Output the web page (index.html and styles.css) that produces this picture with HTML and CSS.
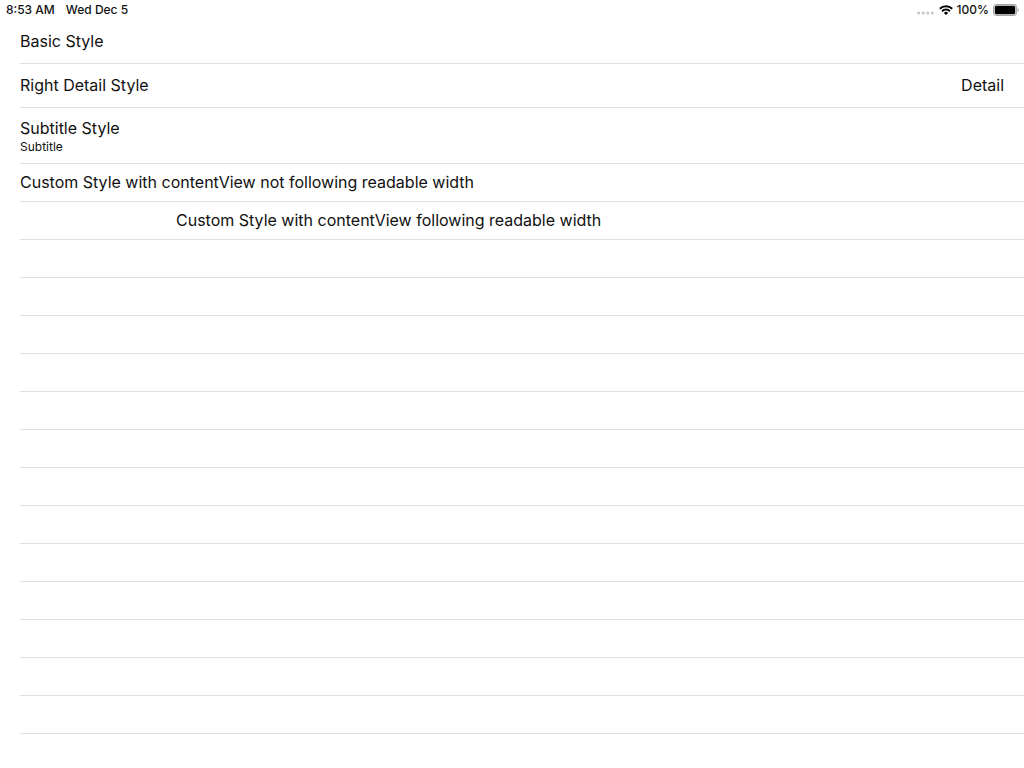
FILE: index.html
```html
<!DOCTYPE html>
<html lang="en">
<head>
    <meta charset="UTF-8">
    <meta name="viewport" content="width=device-width, initial-scale=1.0">
    <title>Table View Cells</title>
    <link rel="stylesheet" href="styles.css">
</head>
<body>
    <header class="status-bar">
        <div class="status-left">
            <span>8:53 AM</span>
            <span>Wed Dec 5</span>
        </div>
        <div class="status-right">
            <svg class="signal" width="18" height="4" viewBox="0 0 18 4" fill="#c8c8c8">
                <circle cx="1.6" cy="2" r="1.6"/>
                <circle cx="6.2" cy="2" r="1.6"/>
                <circle cx="10.8" cy="2" r="1.6"/>
                <circle cx="15.4" cy="2" r="1.6"/>
            </svg>
            <svg class="wifi" width="14" height="10" viewBox="0 0 14 10" fill="none" stroke="#000" stroke-width="2">
                <path d="M0.8 3.8a8.8 8.8 0 0 1 12.4 0"/>
                <path d="M3.1 6.2a5.5 5.5 0 0 1 7.8 0"/>
                <path d="M7 10L4.9 7.9a3 3 0 0 1 4.2 0z" fill="#000" stroke="none"/>
            </svg>
            <span>100%</span>
            <svg class="battery" width="26" height="12" viewBox="0 0 26 12">
                <rect x="0.6" y="0.6" width="22.8" height="10.8" rx="2.8" fill="none" stroke="#a6a6a6" stroke-width="1.2"/>
                <rect x="1.8" y="1.8" width="20.4" height="8.4" rx="1.6" fill="#000"/>
                <path d="M24.6 4v4c1.6-.6 1.6-3.4 0-4z" fill="#a6a6a6"/>
            </svg>
        </div>
    </header>

    <main>
        <ul class="table-view">
            <li class="cell basic">Basic Style</li>
            <li class="cell basic"><span>Right Detail Style</span><span class="detail">Detail</span></li>
            <li class="cell subtitle">
                <span>Subtitle Style</span>
                <small>Subtitle</small>
            </li>
            <li class="cell custom">Custom Style with contentView not following readable width</li>
            <li class="cell custom"><div class="readable">Custom Style with contentView following readable width</div></li>
        </ul>
        <!-- empty rows below the content -->
        <div class="empty-rows"></div>
    </main>
</body>
</html>
```

FILE: styles.css
```css
* { box-sizing: border-box; }
body {
    display: flex;
    flex-direction: column;
    min-height: 100vh;
    margin: 0;
    background: #fff;
    color: #111;
    font-family: 'Inter', sans-serif;
    font-size: 16px;
    line-height: 20px;
}
main { display: flex; flex-direction: column; flex: 1; }
.status-bar {
    display: flex;
    justify-content: space-between;
    align-items: center;
    height: 20px;
    padding: 0 5px 0 6px;
    font-size: 12px;
    font-weight: 500;
}
.status-left { display: flex; gap: 11px; }
.status-right { display: flex; align-items: center; gap: 4px; }
.signal { margin-top: 6px; }
.table-view { list-style: none; margin: 0; padding: 0 0 0 20px; }
.cell {
    display: flex;
    align-items: center;
    min-height: 44px;
    padding-right: 20px;
    border-bottom: 1px solid #e0e0e0;
}
.basic { padding-bottom: 1px; }
.detail { margin-left: auto; }
.subtitle {
    flex-direction: column;
    align-items: flex-start;
    justify-content: center;
    min-height: 56px;
    padding-top: 2px;
}
.subtitle small { font-size: 12px; line-height: 18px; }
.custom { min-height: 38px; padding-bottom: 2px; }
.readable { width: 100%; max-width: 672px; margin: 0 auto; }
.empty-rows {
    flex: 1;
    margin-left: 20px;
    background: repeating-linear-gradient(#fff 0, #fff 37px, #e0e0e0 37px, #e0e0e0 38px);
}
```
